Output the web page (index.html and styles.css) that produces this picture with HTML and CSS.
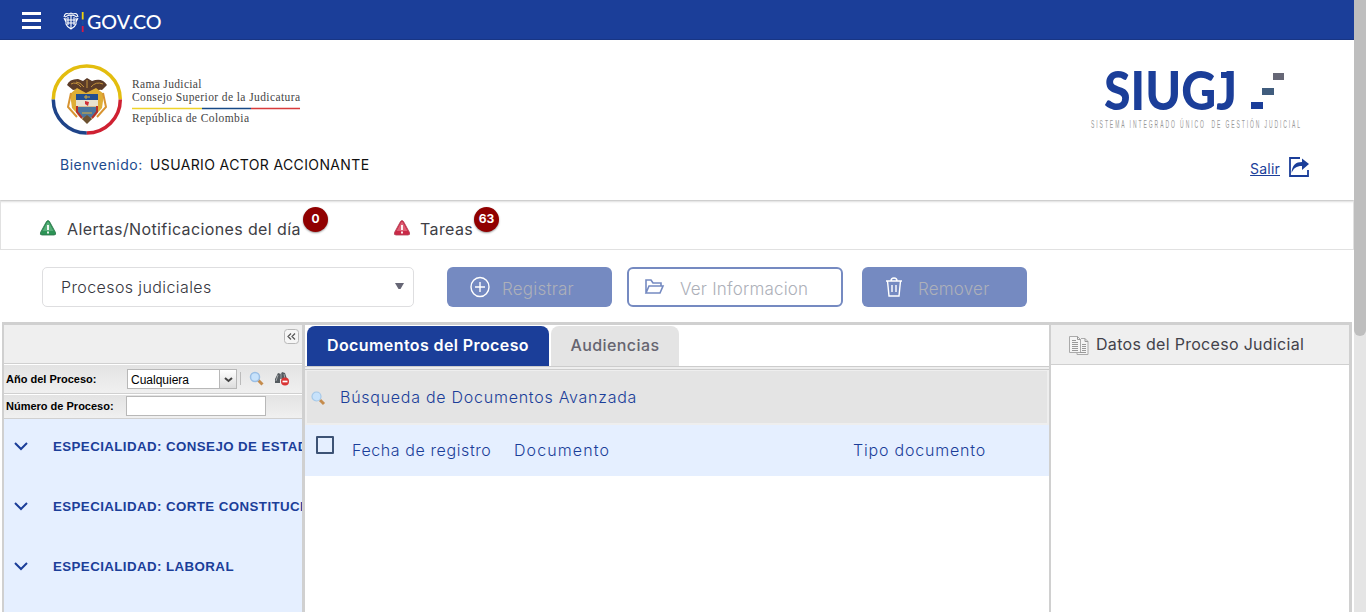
FILE: index.html
```
<!DOCTYPE html>
<html lang="es">
<head>
<meta charset="utf-8">
<title>SIUGJ</title>
<link rel="stylesheet" href="styles.css">
</head>
<body>
<div class="page">
  <div class="topbar">
    <svg class="menu" width="19" height="17"><path d="M0 1.500H19M0 8.500H19M0 15.500H19" stroke="#fff" stroke-width="3"/></svg>
    <svg class="govco" width="100" height="24" viewBox="0 0 100 24">
      <g fill="none" stroke="#fff" stroke-width="1.100"><path d="M1 8q1-5 5-3l2-1 2 1q4-2 5 3M2 8q6-4 12 0M3 9v6q1 3 5 5 4-2 5-5V9M5 8v8M8 6v14M11 8v8M1 9l2 4M15 9l-2 4M4 11h8M4 14h8"/></g>
      <path d="M19.700 3v7.500" stroke="#efd20b" stroke-width="1.800"/><path d="M19.700 12v4" stroke="#174d9d" stroke-width="1.800"/><path d="M19.700 17v6" stroke="#d71a46" stroke-width="1.800"/>
      <text class="gov-text" x="24" y="19.500" textLength="74.500" lengthAdjust="spacingAndGlyphs">GOV.CO</text>
    </svg>
  </div>
  <header class="header">
    <div class="brands">
      <svg width="260" height="74" viewBox="50 63 260 74">
        <g fill="none" stroke-width="3.500"><path d="M53.300 99.500a33.500 33.500 0 0 1 67 0" stroke="#e3bd0f"/><path d="M53.300 99.500a33.500 33.500 0 0 0 33.500 33.500" stroke="#1f4489"/><path d="M120.300 99.500a33.500 33.500 0 0 1-33.500 33.500" stroke="#cf2132"/></g>
        <path d="M67 85q2-6 11-6l5 2 4-3 5 3q10-4 15 4l-5 5q-5-1-7 4H80q-2-5-7-4z" fill="#5b3b28"/>
        <path d="M71 84q5-3 10 3M76 82q4 0 8 5M91 87q5-6 12-3M87 80v8" fill="none" stroke="#c3923b"/>
        <path d="M70 94l7-6 9 5 10-5 8 6-2 14-11 12h-8l-11-12z" fill="#dfae35"/>
        <path d="M71 93l-3 14 9 10M103 93l3 14-9 10" fill="none" stroke="#d89431" stroke-width="2"/>
        <path d="M76 95h22v17q-3 7-11 9-8-2-11-9z" fill="#d7bd91"/><path d="M76 94h22v6H76z" fill="#224e91"/><path d="M76 100h22v6H76z" fill="#e8e3cf"/><path d="M77 107h20v4q-2 6-10 8-8-2-10-8z" fill="#4a769e"/><path d="M77 106v6l5 6M97 106v6l-5 6" fill="none" stroke="#b5302c" stroke-width="2"/>
        <path d="M85 101l4 1-1 4-3-2z" fill="#d12f37"/><path d="M82 119l5-4 5 4-5 5z" fill="#6c5130"/><path d="M84 97h6M86 95v4M82 113h10" stroke="#d9ac3a"/>
        <g class="seal-text"><text x="132" y="88" textLength="69.500">Rama Judicial</text><text x="132" y="100.500" textLength="168">Consejo Superior de la Judicatura</text><text x="132" y="122" textLength="117">República de Colombia</text></g>
        <path d="M132 108.500h70" stroke="#efd32a" stroke-width="1.300"/><path d="M202 108.500h49" stroke="#174986" stroke-width="1.300"/><path d="M251 108.500h49" stroke="#d83b3b" stroke-width="1.300"/>
      </svg>
      <svg width="216" height="66" viewBox="1088 67 216 66">
        <text class="siugj" x="1104" y="110" textLength="133" lengthAdjust="spacingAndGlyphs">SIUGJ</text>
        <path d="M1221 72h10v6h-10z" fill="#1b3e99"/>
        <path d="M1251 102h12v7h-12z" fill="#1b3e99"/><path d="M1262 88h12v7h-12z" fill="#405c7d"/><path d="M1273 73h11v7h-11z" fill="#666776"/>
        <g class="tagline" transform="translate(1091 128) scale(.5 1)"><text x="0" y="0" textLength="226">SISTEMA INTEGRADO ÚNICO</text><text x="241" y="0" textLength="177">DE GESTIÓN JUDICIAL</text></g>
      </svg>
    </div>
    <div class="session">
      <div class="welcome"><span class="hello">Bienvenido:</span><span class="user">USUARIO ACTOR ACCIONANTE</span></div>
      <a class="exit"><span class="exit-label">Salir</span><svg width="22" height="22"><path d="M12 2H2v18h18v-6" fill="none" stroke="#1b3e99" stroke-width="1.800"/><path d="M3.500 17C4 9 8 6 14 6V2.500L21 8l-7 6v-4C8 10 6 12 3.500 17z" fill="#1b3e99"/></svg></a>
    </div>
  </header>
  <div class="alerts">
    <div class="alert a1"><svg width="16" height="16" viewBox="0 0 16 16"><path d="M6.500 1.500q1.500-2 3 0l6 11q.8 2.500-1.500 2.500H2q-2.300 0-1.500-2.500z" fill="#2c9355" stroke="#287248" stroke-width=".8"/><path d="M7.500 2h1l5 9H2.500z" fill="#71be8e" opacity=".6"/><path d="M8 5v5M8 11.500v2" stroke="#fff" stroke-width="1.800"/></svg><span class="t">Alertas/Notificaciones del día</span><b class="badge">0</b></div>
    <div class="alert a2"><svg width="16" height="16" viewBox="0 0 16 16"><path d="M6.500 1.500q1.500-2 3 0l6 11q.8 2.500-1.500 2.500H2q-2.300 0-1.500-2.500z" fill="#ca2947" stroke="#b14355" stroke-width=".8"/><path d="M7.500 2h1l5 9H2.500z" fill="#e98493" opacity=".6"/><path d="M8 5v5M8 11.500v2" stroke="#fff" stroke-width="1.800"/></svg><span class="t tasks">Tareas</span><b class="badge">63</b></div>
  </div>
  <div class="actions">
    <div class="select"><span>Procesos judiciales</span><svg width="9" height="7"><path d="M0 0h9L5.500 6h-2z" fill="#666675"/></svg></div>
    <div class="btn reg"><svg width="20" height="22"><ellipse cx="10" cy="11" rx="9" ry="9.500" fill="none" stroke="#fff" stroke-width="1.400"/><path d="M5 11h10M10 6v10" stroke="#fff" stroke-width="1.400"/></svg><span>Registrar</span></div>
    <div class="btn info"><svg width="20" height="18"><path d="M2 15V2h5l2 3h8v3M2 15L5 8h14l-3 7z" fill="none" stroke="#758ac1" stroke-width="1.600"/></svg><span>Ver Informacion</span></div>
    <div class="btn rem"><svg width="18" height="22"><path d="M1 5h16M6 5q0-3 3-3t3 3M2.500 5l1.500 15h10l1.500-15M7 9v7M11 9v7" fill="none" stroke="#fff" stroke-width="1.400"/></svg><span>Remover</span></div>
  </div>
  <main class="work">
    <aside class="left">
      <div class="lefthead"><svg width="15" height="15"><rect x=".5" y=".5" width="14" height="14" rx="3" fill="#f6f6f6" stroke="#b8b8b8"/><path d="M7 4.500L4 7.500l3 3M11 4.500L8 7.500l3 3" fill="none" stroke="#555" stroke-width="1.200"/></svg></div>
      <div class="filter year"><label>Año del Proceso:</label><div class="combo"><span>Cualquiera</span><i><svg width="9" height="6"><path d="M1 1l3.500 3L8 1" fill="none" stroke="#444" stroke-width="2"/></svg></i></div><em></em>
        <svg class="lens" width="16" height="16"><path d="M9 9l4.500 4.500" stroke="#c58c4d" stroke-width="3"/><circle cx="6" cy="6" r="4.500" fill="#c7e2fb" stroke="#9bbfe5" stroke-width="1.500"/></svg>
        <svg width="16" height="16"><path d="M1 8l3-6 3 1 1-2 3 1 2 6v4H8V8H6v4H1z" fill="#555b60"/><path d="M4 4L2 10M10 3l1 5M7 3v5" stroke="#a1a5a8"/><circle cx="11" cy="10.500" r="4" fill="#d93434"/><path d="M8.500 10.500h5" stroke="#fff" stroke-width="1.700"/></svg></div>
      <div class="filter number"><label>Número de Proceso:</label><div class="input"></div></div>
      <div class="tree">
        <div class="node"><svg width="14" height="9"><path d="M1 1l6 6 6-6" fill="none" stroke="#1b3e99" stroke-width="2"/></svg><span>ESPECIALIDAD: CONSEJO DE ESTADO</span></div>
        <div class="node"><svg width="14" height="9"><path d="M1 1l6 6 6-6" fill="none" stroke="#1b3e99" stroke-width="2"/></svg><span>ESPECIALIDAD: CORTE CONSTITUCIONAL</span></div>
        <div class="node"><svg width="14" height="9"><path d="M1 1l6 6 6-6" fill="none" stroke="#1b3e99" stroke-width="2"/></svg><span>ESPECIALIDAD: LABORAL</span></div>
      </div>
    </aside>
    <section class="docs">
      <div class="tabs"><div class="tab active"><span>Documentos del Proceso</span></div><div class="tab second"><span>Audiencias</span></div></div>
      <div class="strip"></div>
      <div class="search"><svg width="14" height="14"><path d="M9 9l4 4" stroke="#c58c4d" stroke-width="3"/><circle cx="5.500" cy="5.500" r="4.500" fill="#c7e2fb" stroke="#a5c8e8" stroke-width="1.200"/></svg><span>Búsqueda de Documentos Avanzada</span></div>
      <div class="cols"><i class="check"></i><span class="fecha">Fecha de registro</span><span class="doc">Documento</span><span class="tipo">Tipo documento</span></div>
    </section>
    <section class="data">
      <div class="datahead"><svg width="20" height="19"><path d="M.5.500h8l3 3v13h-11zM12 2.500h4l3 3v13H8v-2" fill="#f5f5f5" stroke="#aaa"/><path d="M3 4.500h4M3 6.500h6M3 8.500h6M3 10.500h6M3 12.500h6M3 14.500h6M13 8.500h4M13 10.500h4M13 12.500h4M13 14.500h4M11 16.500h6M8.500.500v3h3M16 2.500v3h3" fill="none" stroke="#999"/></svg><span>Datos del Proceso Judicial</span></div>
    </section>
  </main>
</div>
<div class="scroll"><div class="thumb"></div></div>
</body>
</html>
```
FILE: styles.css
```
* { box-sizing: border-box; }
body { margin: 0; width: 1366px; height: 612px; overflow: hidden; display: flex; background: #fff; font-family: Inter, sans-serif; }
svg { display: block; flex: none; overflow: visible; }
span, label { white-space: nowrap; }
.page { width: 1354px; height: 612px; display: flex; flex-direction: column; }
.scroll { width: 12px; height: 612px; background: #e5e5e5; }
.thumb { height: 336px; background: #bebebe; border-radius: 0 0 6px 6px; }
.topbar { height: 40px; background: #1b3e99; border-bottom: 1px solid #183584; display: flex; padding: 12px 0 0 22px; }
.govco { margin: -3px 0 0 22px; }
.gov-text { font: 500 19.5px Lato, sans-serif; fill: #fff; }
.header { height: 160px; padding: 23px 44px 0 50px; display: flex; flex-direction: column; }
.brands { display: flex; justify-content: space-between; height: 92px; padding-right: 6px; }
.brands svg:last-child { margin-top: 4px; }
.seal-text { font: 11.5px "Liberation Serif", serif; fill: #444; }
.siugj { font: 900 53px Lato, sans-serif; fill: #1b3e99; }
.tagline { font: 10px "Liberation Sans", sans-serif; fill: #999; }
.session { display: flex; justify-content: space-between; height: 45px; }
.welcome { display: flex; gap: 8px; padding: 1px 0 0 10px; font-size: 14px; line-height: 18px; }
.hello { color: #1c4a8d; width: 82px; letter-spacing: .5px; }
.user { color: #111; letter-spacing: .37px; }
.exit { display: flex; gap: 8px; padding-top: 1px; color: #1b3e99; }
.exit-label { font-size: 14px; line-height: 18px; padding-top: 4px; letter-spacing: .2px; text-decoration: underline; }
.alerts { height: 50px; border: 1px solid #e1e1e1; border-top-color: #cfcfcf; box-shadow: inset 0 3px 3px -3px #bbb; display: flex; padding-left: 39px; }
.alert { display: flex; height: 48px; padding-top: 19px; }
.a1 { width: 354px; }
.t { font-size: 16px; line-height: 18px; margin-left: 11px; color: #3e3e45; letter-spacing: .38px; width: 233px; }
.tasks { width: 51px; margin-left: 10px; }
.badge { width: 25px; height: 25px; margin: -13px 0 0 3px; border-radius: 50%; background: #900000; color: #fff; font-size: 12px; line-height: 24px; text-align: center; box-shadow: 0 1px 2px #999; }
.actions { height: 72px; padding: 17px 0 0 42px; display: flex; }
.select { width: 372px; height: 40px; border: 1px solid #dedee0; border-radius: 5px; display: flex; justify-content: space-between; padding: 0 9px 0 18px; font-weight: 300; font-size: 16px; line-height: 38px; color: #36363e; letter-spacing: .4px; }
.select svg { margin-top: 15px; }
.btn { height: 40px; border-radius: 6px; background: #758ac1; display: flex; color: #adb0b9; font-weight: 300; font-size: 17px; line-height: 44px; letter-spacing: .2px; }
.reg { width: 165px; margin-left: 33px; padding-left: 23px; gap: 12px; }
.reg svg, .rem svg { margin-top: 9px; }
.info { width: 216px; margin-left: 15px; border: 2px solid #758ac1; background: #fff; padding-left: 15px; gap: 16px; line-height: 40px; }
.info svg { margin-top: 9px; }
.rem { width: 165px; margin-left: 19px; padding-left: 23px; gap: 15px; }
.work { height: 290px; margin-left: 2px; width: 1350px; display: flex; border: solid #d0d0d0; border-width: 3px 3px 0 2px; }
.left { width: 301px; border-right: 3px solid #d0d0d0; background: #e5efff; overflow: hidden; }
.lefthead { height: 39px; background: #efefef; border-bottom: 1px solid #d0d0d0; display: flex; justify-content: flex-end; padding: 4px 3px 0 0; }
.filter { display: flex; font-family: "Liberation Sans", Arial, sans-serif; font-size: 11px; color: #000; background: linear-gradient(#e3e3e3, #f0f0f0); border-bottom: 1px solid #d0d0d0; padding-left: 2px; }
.filter label { font-weight: 700; width: 121px; line-height: 13px; }
.year { height: 30px; border-top: 1px solid #fff; padding-top: 4px; }
.year label { padding-top: 4px; }
.combo { width: 110px; height: 20px; border: 1px solid #b8b8b8; background: #fff; display: flex; justify-content: space-between; padding-left: 3px; font-size: 12px; line-height: 20px; }
.combo i { width: 17px; border-left: 1px solid #b8b8b8; background: linear-gradient(#fff, #ddd); padding: 7px 0 0 4px; }
.filter em { width: 1px; height: 13px; background: #bbb; margin: 3px 8px 0 3px; }
.filter > svg { margin-top: 2px; }
.filter .lens { margin-right: 9px; }
.number { height: 25px; border-top: 1px solid #fff; padding-top: 1px; }
.number label { padding-top: 4px; width: 120px; }
.input { width: 140px; height: 20px; border: 1px solid #b8b8b8; background: #fff; }
.node { height: 60px; display: flex; padding: 23px 0 0 10px; color: #1b3e99; font: 700 13.3px/16px "Liberation Sans", Arial, sans-serif; letter-spacing: .42px; }
.node span { margin: -3px 0 0 25px; }
.docs { width: 744px; }
.tabs { height: 41px; padding: 1px 2px 0; display: flex; gap: 2px; }
.tab { height: 40px; border-radius: 8px 8px 0 0; font-size: 16px; line-height: 39px; text-align: center; letter-spacing: .4px; }
.active { width: 242px; background: #1b3e99; color: #fff; font-weight: 600; }
.second { width: 128px; background: #e4e4e4; color: #666570; font-weight: 500; }
.strip { height: 4px; border: solid #ccc; border-width: 1px 0; background: #eee; }
.search { height: 55px; border: solid #eee; border-width: 1px 2px 2px; background: #e4e4e4; display: flex; padding: 20px 0 0 4px; font-size: 16px; font-weight: 300; color: #1b3e99; line-height: 20px; }
.search span { margin: -4px 0 0 15px; letter-spacing: .74px; }
.cols { height: 51px; background: #e5efff; display: flex; padding: 11px 0 0 11px; font-size: 16px; font-weight: 300; line-height: 28px; color: #1b3e99; }
.check { width: 18px; height: 18px; border: 2px solid #3d5375; border-radius: 1px; }
.fecha { margin-left: 18px; width: 162px; letter-spacing: .6px; }
.doc { width: 339px; letter-spacing: 1.1px; }
.tipo { letter-spacing: .8px; }
.data { width: 300px; border-left: 2px solid #d0d0d0; background: #fff; }
.datahead { height: 40px; background: #efefef; border-bottom: 1px solid #d0d0d0; display: flex; padding: 11px 0 0 18px; gap: 7px; font-size: 16px; line-height: 17px; color: #42424a; letter-spacing: .3px; }
```
